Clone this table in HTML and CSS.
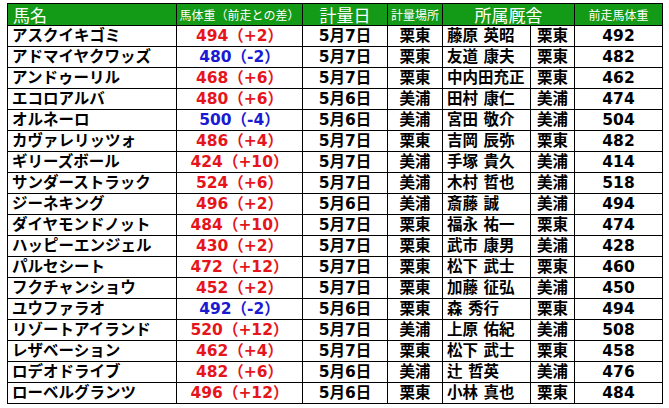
FILE: index.html
```html
<!DOCTYPE html>
<html lang="ja">
<head>
<meta charset="utf-8">
<title>馬体重</title>
<link rel="stylesheet" href="styles.css">
</head>
<body>
<div class="sheet">
  <div class="row head">
    <div class="c left big">馬名</div>
    <div class="c small">馬体重（前走との差）</div>
    <div class="c big">計量日</div>
    <div class="c small">計量場所</div>
    <div class="c big span2">所属厩舎</div>
    <div class="c small">前走馬体重</div>
  </div>
  <div class="row"><div class="c left">アスクイキゴミ</div><div class="c up">494（+2）</div><div class="c">5月7日</div><div class="c">栗東</div><div class="c left">藤原 英昭</div><div class="c">栗東</div><div class="c">492</div></div>
  <div class="row"><div class="c left">アドマイヤクワッズ</div><div class="c down">480（-2）</div><div class="c">5月7日</div><div class="c">栗東</div><div class="c left">友道 康夫</div><div class="c">栗東</div><div class="c">482</div></div>
  <div class="row"><div class="c left">アンドゥーリル</div><div class="c up">468（+6）</div><div class="c">5月7日</div><div class="c">栗東</div><div class="c left">中内田充正</div><div class="c">栗東</div><div class="c">462</div></div>
  <div class="row"><div class="c left">エコロアルバ</div><div class="c up">480（+6）</div><div class="c">5月6日</div><div class="c">美浦</div><div class="c left">田村 康仁</div><div class="c">美浦</div><div class="c">474</div></div>
  <div class="row"><div class="c left">オルネーロ</div><div class="c down">500（-4）</div><div class="c">5月6日</div><div class="c">美浦</div><div class="c left">宮田 敬介</div><div class="c">美浦</div><div class="c">504</div></div>
  <div class="row"><div class="c left">カヴァレリッツォ</div><div class="c up">486（+4）</div><div class="c">5月7日</div><div class="c">栗東</div><div class="c left">吉岡 辰弥</div><div class="c">栗東</div><div class="c">482</div></div>
  <div class="row"><div class="c left">ギリーズボール</div><div class="c up">424（+10）</div><div class="c">5月7日</div><div class="c">美浦</div><div class="c left">手塚 貴久</div><div class="c">美浦</div><div class="c">414</div></div>
  <div class="row"><div class="c left">サンダーストラック</div><div class="c up">524（+6）</div><div class="c">5月7日</div><div class="c">美浦</div><div class="c left">木村 哲也</div><div class="c">美浦</div><div class="c">518</div></div>
  <div class="row"><div class="c left">ジーネキング</div><div class="c up">496（+2）</div><div class="c">5月6日</div><div class="c">美浦</div><div class="c left">斎藤 誠</div><div class="c">美浦</div><div class="c">494</div></div>
  <div class="row"><div class="c left">ダイヤモンドノット</div><div class="c up">484（+10）</div><div class="c">5月7日</div><div class="c">栗東</div><div class="c left">福永 祐一</div><div class="c">栗東</div><div class="c">474</div></div>
  <div class="row"><div class="c left">ハッピーエンジェル</div><div class="c up">430（+2）</div><div class="c">5月7日</div><div class="c">栗東</div><div class="c left">武市 康男</div><div class="c">美浦</div><div class="c">428</div></div>
  <div class="row"><div class="c left">パルセシート</div><div class="c up">472（+12）</div><div class="c">5月7日</div><div class="c">栗東</div><div class="c left">松下 武士</div><div class="c">栗東</div><div class="c">460</div></div>
  <div class="row"><div class="c left">フクチャンショウ</div><div class="c up">452（+2）</div><div class="c">5月7日</div><div class="c">栗東</div><div class="c left">加藤 征弘</div><div class="c">美浦</div><div class="c">450</div></div>
  <div class="row"><div class="c left">ユウファラオ</div><div class="c down">492（-2）</div><div class="c">5月6日</div><div class="c">栗東</div><div class="c left">森 秀行</div><div class="c">栗東</div><div class="c">494</div></div>
  <div class="row"><div class="c left">リゾートアイランド</div><div class="c up">520（+12）</div><div class="c">5月7日</div><div class="c">美浦</div><div class="c left">上原 佑紀</div><div class="c">美浦</div><div class="c">508</div></div>
  <div class="row"><div class="c left">レザベーション</div><div class="c up">462（+4）</div><div class="c">5月7日</div><div class="c">栗東</div><div class="c left">松下 武士</div><div class="c">栗東</div><div class="c">458</div></div>
  <div class="row"><div class="c left">ロデオドライブ</div><div class="c up">482（+6）</div><div class="c">5月6日</div><div class="c">美浦</div><div class="c left">辻 哲英</div><div class="c">美浦</div><div class="c">476</div></div>
  <div class="row"><div class="c left">ローベルグランツ</div><div class="c up">496（+12）</div><div class="c">5月6日</div><div class="c">栗東</div><div class="c left">小林 真也</div><div class="c">栗東</div><div class="c">484</div></div>
</div>
</body>
</html>
```
FILE: styles.css
```css
html, body {
  margin: 0;
  padding: 0;
  background: #ffffff;
}

body {
  padding: 3px 0 0 7px;
}

.sheet {
  width: 656px;
  box-sizing: border-box;
  border-left: 1px solid #000;
  border-top: 1px solid #000;
  font-family: "DejaVu Sans", "Noto Sans CJK JP", sans-serif;
  font-weight: bold;
  font-size: 15.5px;
  color: #000;
}

.row {
  display: grid;
  grid-template-columns: 169px 126px 85px 55px 88px 44px 88px;
  height: 21px;
}

.c {
  box-sizing: border-box;
  border-right: 1px solid #000;
  border-bottom: 1px solid #000;
  display: flex;
  align-items: center;
  justify-content: center;
  white-space: nowrap;
  line-height: 20px;
  min-width: 0;
}

.c.left {
  justify-content: flex-start;
  padding-left: 4px;
}

.up {
  color: #e5151b;
}

.down {
  color: #1a1ad2;
}

.head {
  height: 22px;
  background: #139a16;
}

.head .c {
  color: #ffffff;
  font-family: "Noto Sans CJK JP", sans-serif;
  font-weight: normal;
  line-height: 21px;
}

.head .c.left {
  padding-left: 5px;
}

.head .big {
  font-size: 17px;
}

.head .small {
  font-size: 12px;
}

.head .span2 {
  grid-column: span 2;
}
```
